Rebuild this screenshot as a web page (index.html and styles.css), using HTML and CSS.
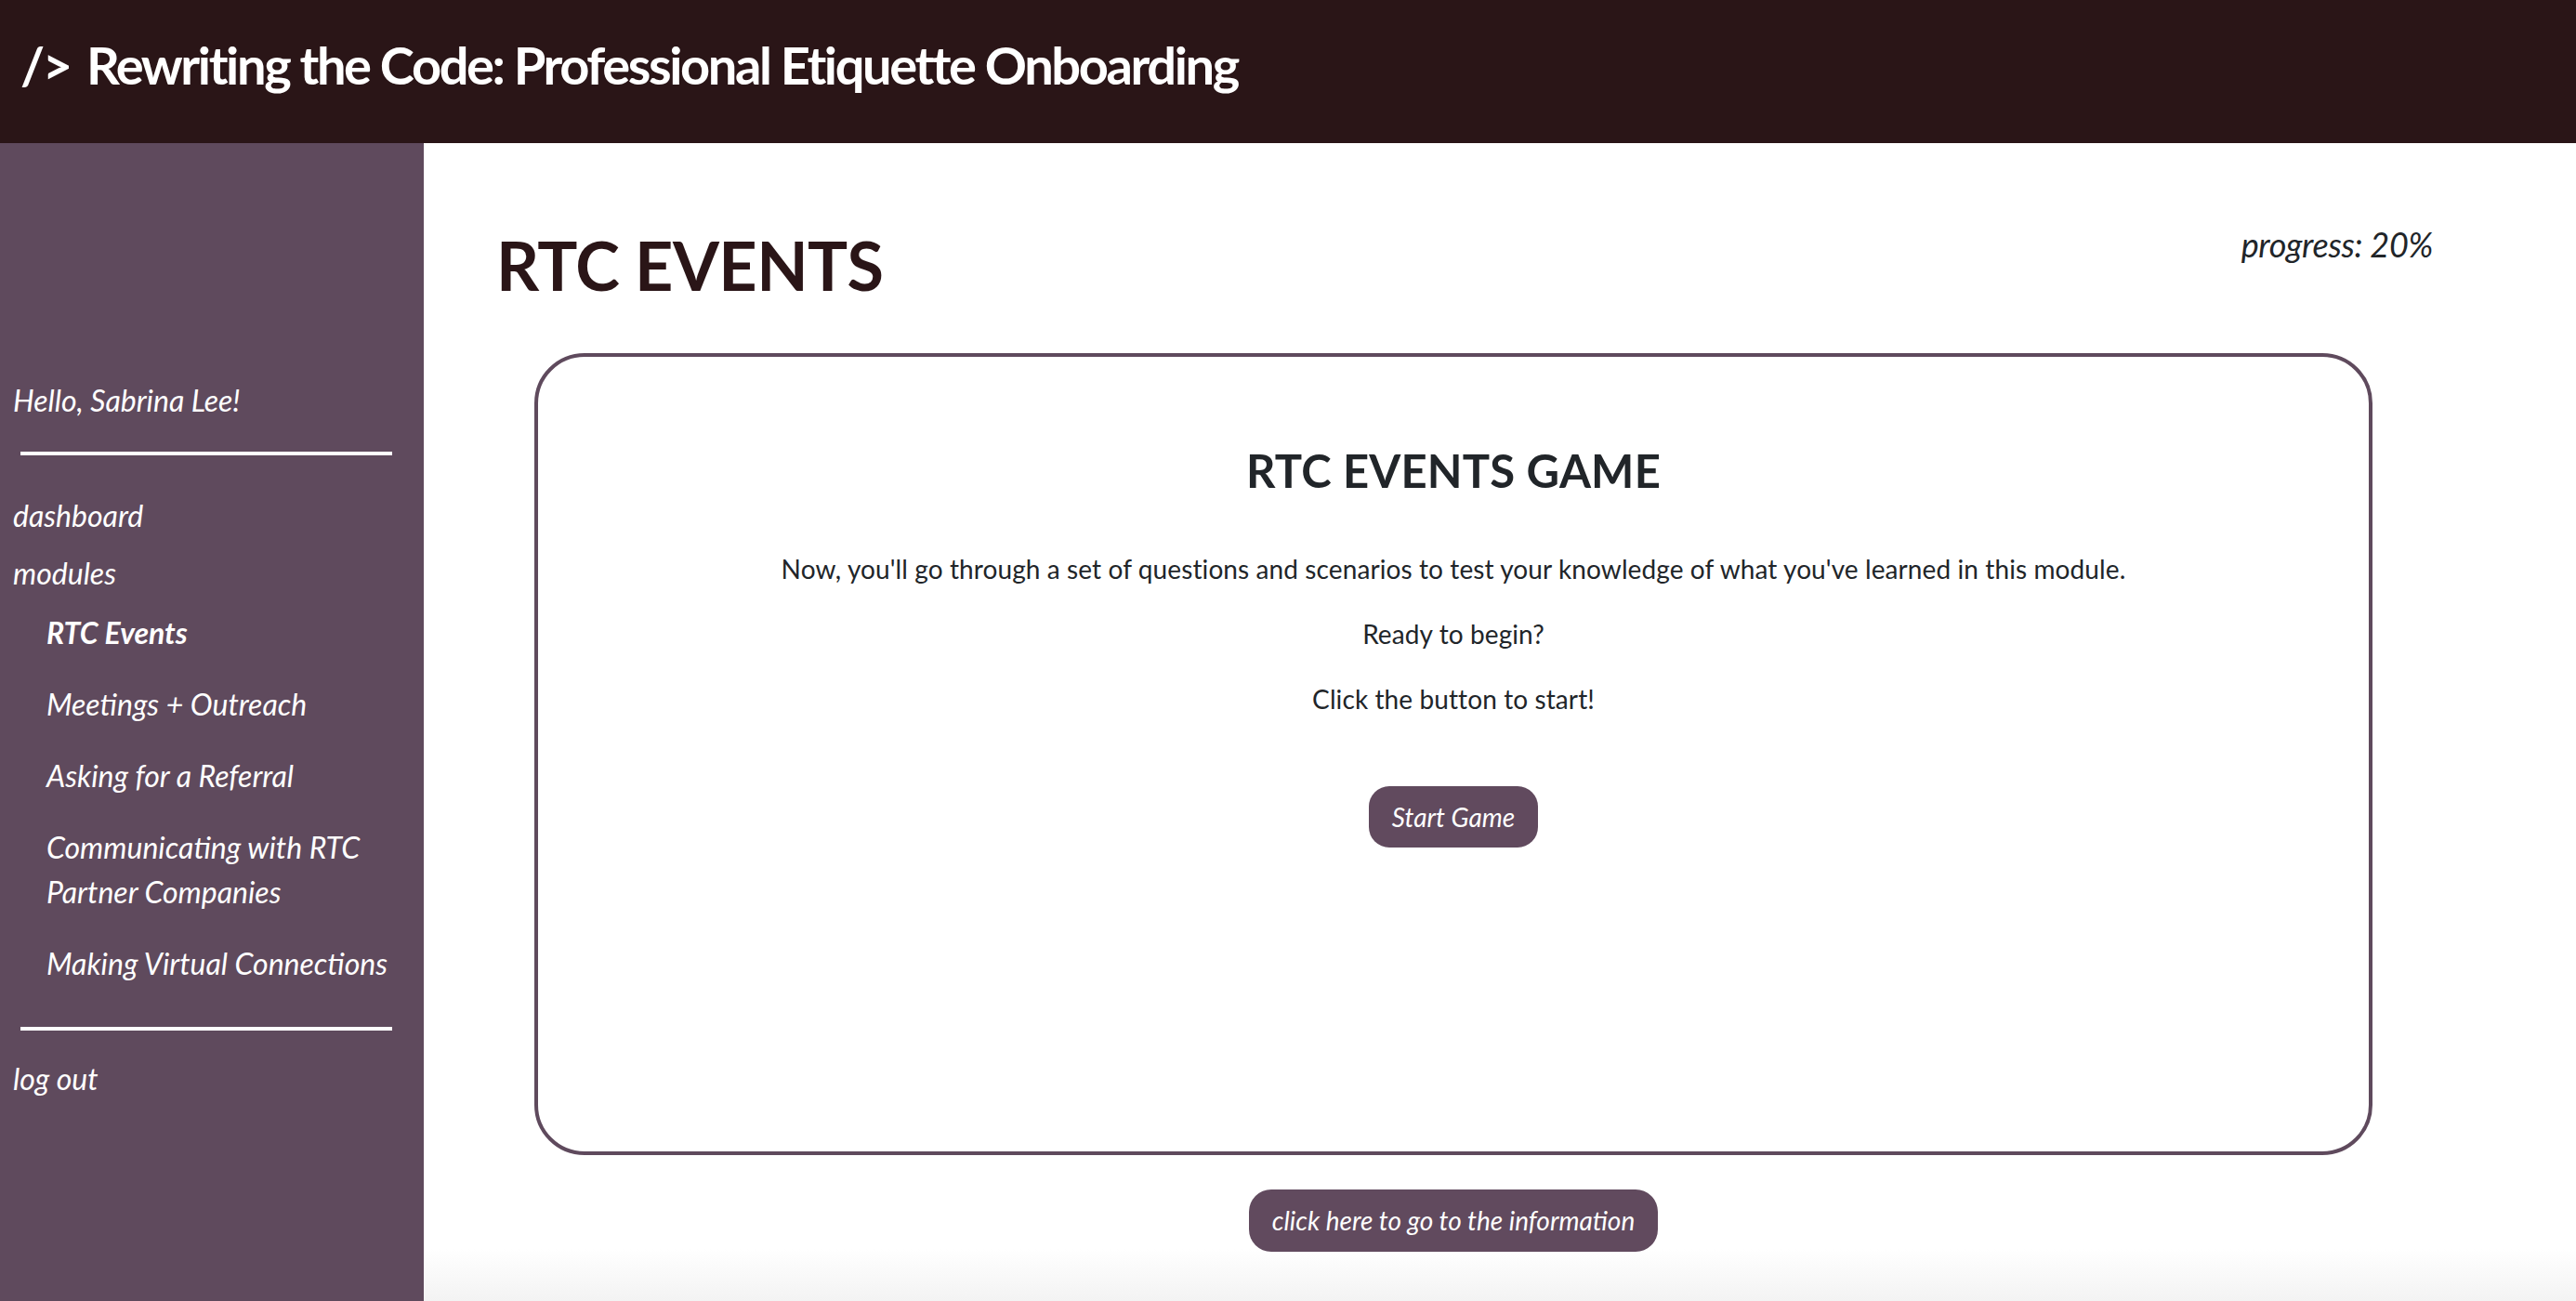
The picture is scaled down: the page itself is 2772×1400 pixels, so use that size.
FILE: index.html
```html
<!DOCTYPE html>
<html lang="en">
<head>
<meta charset="utf-8">
<title>RTC Events</title>
<link rel="stylesheet" href="styles.css">
</head>
<body>
<header class="topbar">
  <h1 class="brand"><span class="brand-mark">/&gt;</span> Rewriting the Code: Professional Etiquette Onboarding</h1>
</header>
<div class="layout">
  <aside class="sidebar">
    <p class="hello">Hello, Sabrina Lee!</p>
    <hr class="rule rule-top">
    <nav class="nav">
      <a class="nav-link" href="#">dashboard</a>
      <a class="nav-link" href="#">modules</a>
      <ul class="sub-list">
        <li><a class="sub-link active" href="#">RTC Events</a></li>
        <li><a class="sub-link" href="#">Meetings + Outreach</a></li>
        <li><a class="sub-link" href="#">Asking for a Referral</a></li>
        <li><a class="sub-link" href="#">Communicating with RTC Partner Companies</a></li>
        <li><a class="sub-link" href="#">Making Virtual Connections</a></li>
      </ul>
    </nav>
    <hr class="rule rule-bottom">
    <a class="nav-link logout" href="#">log out</a>
  </aside>
  <main class="main">
    <div class="title-row">
      <h2 class="page-title">RTC EVENTS</h2>
      <p class="progress">progress: 20%</p>
    </div>
    <div class="content">
      <section class="card">
        <h3 class="card-title">RTC EVENTS GAME</h3>
        <p class="card-text">Now, you'll go through a set of questions and scenarios to test your knowledge of what you've learned in this module.</p>
        <p class="card-text">Ready to begin?</p>
        <p class="card-text">Click the button to start!</p>
        <button class="btn btn-start" type="button">Start Game</button>
      </section>
      <button class="btn btn-info" type="button">click here to go to the information</button>
    </div>
  </main>
</div>
</body>
</html>
```

FILE: styles.css
```css
* {
  box-sizing: border-box;
}

html, body {
  margin: 0;
  padding: 0;
}

body {
  font-family: Lato, "Open Sans", "Liberation Sans", sans-serif;
  color: #212529;
  background: #ffffff;
  height: 1400px;
  overflow: hidden;
}

.topbar {
  height: 154px;
  background: #2a1517;
  padding: 36px 22px 0;
}

.brand {
  margin: 0;
  color: #ffffff;
  font-size: 56px;
  font-weight: 700;
  line-height: 1.2;
  letter-spacing: -2.4px;
}

.brand-mark {
  margin-right: 6px;
}

.layout {
  display: flex;
  height: 1246px;
}

.sidebar {
  width: 456px;
  flex: 0 0 456px;
  background: #5f4a5d;
  padding: 253px 24px 0 14px;
  color: #ffffff;
  font-style: italic;
  font-size: 32px;
  line-height: 48px;
}

.hello {
  margin: 0;
}

.rule {
  border: 0;
  height: 4px;
  width: 400px;
  background: #ffffff;
  margin: 0 0 0 8px;
}

.rule-top {
  margin-top: 31px;
}

.rule-bottom {
  margin-top: 44px;
}

.nav {
  display: flex;
  flex-direction: column;
  margin-top: 41px;
}

.nav-link {
  display: block;
  color: #ffffff;
  text-decoration: none;
  margin-bottom: 14px;
}

.nav-link.logout {
  margin-top: 28px;
}

.sub-list {
  list-style: none;
  margin: 2px 0 0;
  padding: 0 0 0 36px;
  display: flex;
  flex-direction: column;
  gap: 29px;
}

.sub-link {
  color: #ffffff;
  text-decoration: none;
}

.sub-link.active {
  font-weight: 700;
}

.main {
  flex: 1;
  padding: 88px 154px 0 78px;
  background: linear-gradient(to bottom, #ffffff 0, #ffffff calc(100% - 56px), #f3f3f3 100%);
}

.title-row {
  display: flex;
  justify-content: space-between;
  align-items: flex-start;
}

.page-title {
  margin: 0;
  color: #2a1517;
  font-size: 72px;
  font-weight: 700;
  line-height: 1.2;
  letter-spacing: -0.6px;
}

.progress {
  margin: 0;
  font-style: italic;
  font-size: 36px;
  line-height: 1.2;
  letter-spacing: -0.3px;
  color: #212529;
}

.content {
  margin: 52px 65px 0 41px;
  display: flex;
  flex-direction: column;
  align-items: center;
}

.card {
  width: 100%;
  height: 863px;
  border: 4px solid #5f4a5d;
  border-radius: 54px;
  padding: 93px 40px 0;
  text-align: center;
  display: flex;
  flex-direction: column;
  align-items: center;
}

.card-title {
  margin: 0 0 55px;
  font-size: 49px;
  font-weight: 700;
  line-height: 1.2;
  letter-spacing: 0.2px;
  color: #212529;
}

.card-text {
  margin: 0 0 28px;
  font-size: 28px;
  line-height: 42px;
  letter-spacing: 0.1px;
}

.btn {
  font-family: inherit;
  font-style: italic;
  font-size: 28px;
  line-height: 42px;
  color: #ffffff;
  background: #614a5e;
  border: 0;
  border-radius: 22px;
  padding: 12px 24px;
  cursor: pointer;
}

.btn-start {
  margin-top: 45px;
  padding: 12px 25px;
}

.btn-info {
  margin-top: 37px;
  padding: 12px 25px 13px;
  border-radius: 24px;
}
```
